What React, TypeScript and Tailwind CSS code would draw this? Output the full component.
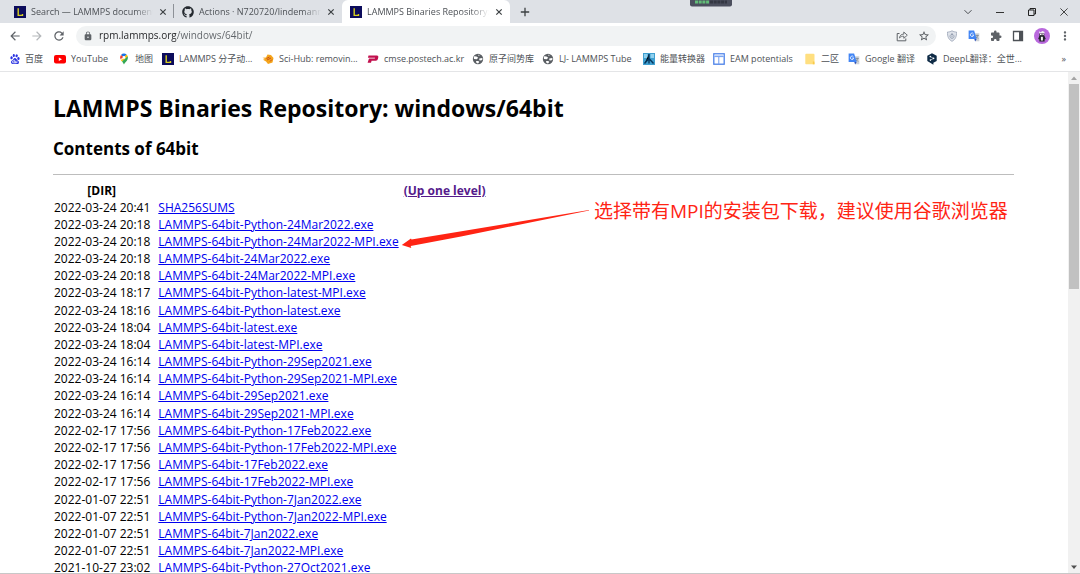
import React from "react";
import {
  MdArrowBack,
  MdArrowForward,
  MdRefresh,
  MdLock,
  MdStarBorder,
  MdExtension,
  MdMoreVert,
} from "react-icons/md";
import { FaGithub } from "react-icons/fa";
import { SiBaidu } from "react-icons/si";

const files: [string, string][] = [
  ["2022-03-24 20:41", "SHA256SUMS"],
  ["2022-03-24 20:18", "LAMMPS-64bit-Python-24Mar2022.exe"],
  ["2022-03-24 20:18", "LAMMPS-64bit-Python-24Mar2022-MPI.exe"],
  ["2022-03-24 20:18", "LAMMPS-64bit-24Mar2022.exe"],
  ["2022-03-24 20:18", "LAMMPS-64bit-24Mar2022-MPI.exe"],
  ["2022-03-24 18:17", "LAMMPS-64bit-Python-latest-MPI.exe"],
  ["2022-03-24 18:16", "LAMMPS-64bit-Python-latest.exe"],
  ["2022-03-24 18:04", "LAMMPS-64bit-latest.exe"],
  ["2022-03-24 18:04", "LAMMPS-64bit-latest-MPI.exe"],
  ["2022-03-24 16:14", "LAMMPS-64bit-Python-29Sep2021.exe"],
  ["2022-03-24 16:14", "LAMMPS-64bit-Python-29Sep2021-MPI.exe"],
  ["2022-03-24 16:14", "LAMMPS-64bit-29Sep2021.exe"],
  ["2022-03-24 16:14", "LAMMPS-64bit-29Sep2021-MPI.exe"],
  ["2022-02-17 17:56", "LAMMPS-64bit-Python-17Feb2022.exe"],
  ["2022-02-17 17:56", "LAMMPS-64bit-Python-17Feb2022-MPI.exe"],
  ["2022-02-17 17:56", "LAMMPS-64bit-17Feb2022.exe"],
  ["2022-02-17 17:56", "LAMMPS-64bit-17Feb2022-MPI.exe"],
  ["2022-01-07 22:51", "LAMMPS-64bit-Python-7Jan2022.exe"],
  ["2022-01-07 22:51", "LAMMPS-64bit-Python-7Jan2022-MPI.exe"],
  ["2022-01-07 22:51", "LAMMPS-64bit-7Jan2022.exe"],
  ["2022-01-07 22:51", "LAMMPS-64bit-7Jan2022-MPI.exe"],
  ["2021-10-27 23:02", "LAMMPS-64bit-Python-27Oct2021.exe"],
];

function LammpsIcon() {
  return (
    <svg viewBox="0 0 12 12" className="size-3 shrink-0">
      <rect width="12" height="12" fill="#0c0c5c" />
      <path d="M4.2 2.2v7.2h4.3V7.9" fill="none" stroke="#d8d020" strokeWidth="1.4" />
    </svg>
  );
}

function CloseIcon() {
  return (
    <svg viewBox="0 0 8 8" className="size-2">
      <path d="M1.3 1.3l5.4 5.4M6.7 1.3L1.3 6.7" stroke="#3c4043" strokeWidth="1.2" />
    </svg>
  );
}

function YoutubeIcon() {
  return (
    <svg viewBox="0 0 12 12" className="size-3 shrink-0">
      <rect y="2" width="12" height="8.4" rx="2" fill="#f00" />
      <path d="M4.8 4.4v3.6L8 6.2z" fill="#fff" />
    </svg>
  );
}

function MapsIcon() {
  return (
    <svg viewBox="0 0 12 12" className="size-3 shrink-0">
      <path d="M6 .6A3.9 3.9 0 0 0 3 2L6 4.6 8.6 1.6A3.9 3.9 0 0 0 6 .6z" fill="#1a73e8" />
      <path d="M3 2a3.9 3.9 0 0 0-.7 4L6 4.5z" fill="#ea4335" />
      <path d="M8.4 1.5L4 6.8 2.4 6.3c.5 1 1 1.5 1.5 2.2L9.8 3.4a3.9 3.9 0 0 0-1.4-1.9z" fill="#fbbc04" />
      <path d="M9.7 3.2L4 8.6c1 1.2 1.4 1.9 2 3 .7-2.2 3.9-3.6 3.9-7 0-.5-.1-1-.2-1.4z" fill="#34a853" />
      <circle cx="6" cy="4.5" r="1.4" fill="#fff" />
    </svg>
  );
}

function RavenIcon() {
  return (
    <svg viewBox="0 0 12 12" className="size-3 shrink-0">
      <path d="M.5 4.7L4 4.5 5.500 1.500l3.500.5L11.500 5l-1 4.500L6 11 4 8.500 1 6.800 3 6z" fill="#f5a51c" />
      <path d="M4.5 5.5l3-1.5M5 7l4-2M8 8.5l2-2" stroke="#c8501a" strokeWidth="1" />
    </svg>
  );
}

function PostechIcon() {
  return (
    <svg viewBox="0 0 12 12" className="size-3 shrink-0">
      <path d="M1.500 2.500H10q1.700 0 1.300 1.800L10.900 6q-.4 1.700-2 1.700H4.600L4 9.700H.6L2 5.500h5.800L8.100 4.800H.9z" fill="#c2104e" />
    </svg>
  );
}

function GlobeIcon() {
  return (
    <svg viewBox="0 0 12 12" className="size-3 shrink-0">
      <circle cx="6" cy="6" r="5.2" fill="#5a5e63" />
      <path d="M2.200 3.200l2.300.3 1.700 1.200-1.400 1.500-2.800-.2-.2-1.500zM6 1.800l1.500.2L7 3.200zM7.300 5.600l3-.6.2 1.500-1.400 1.100-1.800-.4zM4 8h2.300l1 1-1.300 1.500-1.500-.4z" fill="#fff" />
    </svg>
  );
}

function EnergyIcon() {
  return (
    <svg viewBox="0 0 12 12" className="size-3 shrink-0">
      <rect width="12" height="12" fill="#3f9fd0" />
      <path d="M1 1h3.500v4H1zM7.500 1H11v4H7.500z" fill="#8fd0ee" />
      <path d="M6 1v4.500L1.500 10.500M6 5.500l4.500 5M6 5v5.500" stroke="#06385f" strokeWidth="1.400" />
    </svg>
  );
}

function EamIcon() {
  return (
    <svg viewBox="0 0 12 12" className="size-3 shrink-0">
      <rect x=".8" y=".8" width="10.4" height="10.4" fill="#fff" stroke="#4a80e8" strokeWidth="1.3" />
      <path d="M1.5 1.5h9v1.600h-9z" fill="#c5d8fb" />
      <path d="M1.4 3.6h9.2M5.8 4v7" stroke="#6f9cf0" strokeWidth="1" />
    </svg>
  );
}

function FolderIcon() {
  return (
    <svg viewBox="0 0 12 12" className="size-3 shrink-0">
      <path d="M2.500.7h7a1 1 0 0 1 1 1v6.800l-.6.5.6.5v1.800h-8.500a.7.7 0 0 1-.7-.7V1.700a1 1 0 0 1 1.200-1z" fill="#ffdf80" />
      <path d="M8.800 8.500h1.700v2.800H8.800z" fill="#f9cb4b" />
    </svg>
  );
}

function TranslateIcon() {
  return (
    <svg viewBox="0 0 12 12" className="size-3 shrink-0">
      <path d="M5 3.200h6.300v8.100H7.500z" fill="#cfd3d8" />
      <path d="M7.500 5.500h3.200M9.100 4.700v.8M10 5.600L7.800 8.300M8.200 6.500l2 2.200" stroke="#6b7680" strokeWidth=".6" fill="none" />
      <path d="M.6.6h5.500l2.600 8.300H.6z" fill="#4285f4" />
      <path d="M6.300 9h2.400l-1.600 2.400z" fill="#2b50b8" />
      <path d="M5.500 3.900a1.700 1.700 0 1 0 .2 1.200H4.200" stroke="#fff" strokeWidth=".8" fill="none" />
    </svg>
  );
}

function DeeplIcon() {
  return (
    <svg viewBox="0 0 12 12" className="size-3 shrink-0">
      <path d="M6 .2l4.700 2.500v5.200L7.400 9.800v2L5.400 10.600 1.300 8V2.700z" fill="#0f2b46" />
      <path d="M4.300 3.600l3.200 1.800-3 1.700" stroke="#fff" strokeWidth=".6" fill="none" />
      <circle cx="4.300" cy="3.600" r=".8" fill="#fff" />
      <circle cx="7.600" cy="5.400" r=".8" fill="#fff" />
      <circle cx="4.400" cy="7.100" r=".8" fill="#fff" />
    </svg>
  );
}

function ShareIcon() {
  return (
    <svg viewBox="0 0 12 12" className="size-3" fill="none" stroke="#5f6368" strokeWidth="1">
      <path d="M3.500 3.500H1.200v7.300h8.600V8.500" />
      <path d="M3.500 8c.3-2.500 1.700-3.800 4.300-3.900V2l3.500 3.200L7.800 8.300V6.200C6 6.200 4.600 6.700 3.500 8z" strokeLinejoin="round" strokeWidth=".9" />
    </svg>
  );
}

function ShieldIcon() {
  return (
    <svg viewBox="0 0 12 12" className="size-3">
      <path d="M6 .8c1.500.9 3 1.200 4.500 1.200.2 4.500-1 7.500-4.500 9.300C2.500 9.500 1.300 6.500 1.500 2 3 2 4.500 1.700 6 .8z" fill="#dfe3ea" stroke="#a3acbc" strokeWidth=".9" />
      <path d="M6 3v1.500M4.200 5.500a2 2 0 1 0 3.600 0 2 2 0 0 0-3.600 0zM6 5.300v2" stroke="#8a95a8" strokeWidth=".8" fill="none" />
    </svg>
  );
}

function AvatarIcon() {
  return (
    <svg viewBox="0 0 16 16" className="size-4">
      <circle cx="8" cy="8" r="8" fill="#b968dd" />
      <path d="M5 3.300l1.500 1 2-1.200 2 .9v1.500H5.300z" fill="#eee" />
      <path d="M5.300 5.500h5v2.700h-5z" fill="#3a3540" />
      <path d="M6 5.700h1.500v1.300H6zM8.500 5.700h1.200v1.300H8.500z" fill="#fff" />
      <path d="M5.300 8h5.200l1.300 3-1.200.6v2H5.400v-2L4.200 11z" fill="#22252a" />
      <path d="M6.900 8.800h2v3.700h-2z" fill="#f4f4f4" />
    </svg>
  );
}

function Tab({ title, icon, active = false, divider = false }: { title: string; icon: React.ReactNode; active?: boolean; divider?: boolean }) {
  return (
    <div
      className={
        active
          ? "flex h-full w-42 items-center gap-[5px] rounded-t-md bg-white pr-[7px] pl-2"
          : "relative flex h-full w-42 items-center gap-[5px] pr-[7px] pl-2"
      }
    >
      {icon}
      <a href="#" className="min-w-0 flex-1 text-[9px] whitespace-nowrap text-[#4d5156] [mask-image:linear-gradient(90deg,#000_85%,transparent)]">
        {title}
      </a>
      <button aria-label="Close tab" className="ml-px">
        <CloseIcon />
      </button>
      {divider && <span className="absolute top-1 right-0 h-3.5 w-px bg-[#8d9197]" />}
    </div>
  );
}

const bookmarks: { label: string; icon: React.ReactNode; width: string }[] = [
  { label: "百度", icon: <SiBaidu className="size-2.5 shrink-0 text-[#2932e1]" />, width: "w-11" },
  { label: "YouTube", icon: <YoutubeIcon />, width: "w-16" },
  { label: "地图", icon: <MapsIcon />, width: "w-11" },
  { label: "LAMMPS 分子动...", icon: <LammpsIcon />, width: "w-[100px]" },
  { label: "Sci-Hub: removin...", icon: <RavenIcon />, width: "w-[105px]" },
  { label: "cmse.postech.ac.kr", icon: <PostechIcon />, width: "w-[105px]" },
  { label: "原子间势库", icon: <GlobeIcon />, width: "w-[70px]" },
  { label: "LJ- LAMMPS Tube", icon: <GlobeIcon />, width: "w-[101px]" },
  { label: "能量转换器", icon: <EnergyIcon />, width: "w-[70px]" },
  { label: "EAM potentials", icon: <EamIcon />, width: "w-[91px]" },
  { label: "二区", icon: <FolderIcon />, width: "w-11" },
  { label: "Google 翻译", icon: <TranslateIcon />, width: "w-[78px]" },
  { label: "DeepL翻译：全世...", icon: <DeeplIcon />, width: "w-[100px]" },
];

export default function App() {
  return (
    <div className="flex h-screen flex-col overflow-hidden border-b border-[#c8c8c8] bg-white font-['Open_Sans','Noto_Sans_CJK_SC',sans-serif] text-black">
      <header className="shrink-0">
        <div className="relative flex h-[23px] items-center bg-[#dee1e6] pl-1.5">
          <Tab title="Search — LAMMPS document" icon={<LammpsIcon />} divider />
          <Tab title="Actions · N720720/lindemann" icon={<FaGithub className="size-3 shrink-0 text-[#24292f]" />} />
          <Tab title="LAMMPS Binaries Repository:" icon={<LammpsIcon />} active />
          <button aria-label="New tab" className="ml-2.5">
            <svg viewBox="0 0 10 10" className="size-2.5">
              <path d="M5 .8v8.400M.8 5h8.400" stroke="#3c4043" strokeWidth="1.300" />
            </svg>
          </button>
          <div className="ml-auto flex items-center gap-6 pr-3">
            <button aria-label="Search tabs">
              <svg viewBox="0 0 8 8" className="size-2"><path d="M.5 2.200L4 5.700l3.500-3.500" fill="none" stroke="#4a4d52" /></svg>
            </button>
            <button aria-label="Minimize">
              <svg viewBox="0 0 8 8" className="size-2"><path d="M0 4.500h8" stroke="#333" /></svg>
            </button>
            <button aria-label="Restore">
              <svg viewBox="0 0 8 8" className="size-2"><path d="M.5 2h5.500v5.500H.5zM2 2V.5h5.500V6H6" fill="none" stroke="#222" /></svg>
            </button>
            <button aria-label="Close window">
              <svg viewBox="0 0 8 8" className="size-2"><path d="M.4.4l7.200 7.200M7.600.4L.4 7.600" stroke="#333" strokeWidth=".9" /></svg>
            </button>
          </div>
          <svg viewBox="0 0 42 7" className="absolute top-0 left-[690px] h-[7px] w-[42px]">
            <path d="M0 0h42v4.500q0 2-2 2H2q-2 0-2-2z" fill="#4c4f5e" />
            <path d="M5 2h14" stroke="#62bd78" strokeWidth="3" strokeDasharray="3 .7" />
            <path d="M20 2h17" stroke="#343743" strokeWidth="3" strokeDasharray="3 .7" />
          </svg>
        </div>

        <div className="flex h-[25px] items-center pr-2 pl-2">
          <div className="flex w-[68px] items-center gap-2 text-[#5f6368]">
            <button aria-label="Back"><MdArrowBack className="size-3.5" /></button>
            <button aria-label="Forward"><MdArrowForward className="size-3.5 text-[#b4b7ba]" /></button>
            <button aria-label="Reload"><MdRefresh className="size-3.5" /></button>
          </div>
          <div className="flex h-5 flex-1 items-center rounded-full bg-[#f1f3f4] pr-1.5 pl-[7px]">
            <MdLock className="size-2.5 text-[#5f6368]" />
            <input
              aria-label="Address"
              defaultValue="rpm.lammps.org/windows/64bit/"
              className="ml-1.5 min-w-0 flex-1 bg-[linear-gradient(90deg,#202124_77px,#5f6368_77px)] bg-clip-text text-[10px] text-transparent outline-none"
            />
            <button aria-label="Share"><ShareIcon /></button>
            <button aria-label="Bookmark this page" className="ml-2.5"><MdStarBorder className="size-3 text-[#4d5156]" /></button>
          </div>
          <div className="ml-2.5 flex items-center gap-2.5 text-[#5f6368]">
            <button aria-label="Shield extension"><ShieldIcon /></button>
            <button aria-label="Translate extension"><TranslateIcon /></button>
            <button aria-label="Extensions"><MdExtension className="size-3" /></button>
            <button aria-label="Side panel">
              <svg viewBox="0 0 12 12" className="size-3"><path d="M1.500 1.500h9v9h-9z" fill="none" stroke="#4d5156" strokeWidth="1.300" /><path d="M7 1.500h3.500v9H7z" fill="#4d5156" /></svg>
            </button>
            <div className="flex items-center gap-2">
              <button aria-label="Profile"><AvatarIcon /></button>
              <button aria-label="Menu"><MdMoreVert className="size-3.5" /></button>
            </div>
          </div>
        </div>

        <nav aria-label="Bookmarks" className="flex h-6 items-center border-b border-[#e4e5e7] pr-3.5 pb-px pl-2.5 text-[9px] text-[#4d5156]">
          <div className="flex">
            {bookmarks.map((b) => (
              <a key={b.label} href="#" className={`${b.width} flex shrink-0 items-center gap-[5px] whitespace-nowrap`}>
                {b.icon}
                <span>{b.label}</span>
              </a>
            ))}
          </div>
          <button aria-label="More bookmarks" className="ml-auto">»</button>
        </nav>
      </header>

      <div className="flex min-h-0 flex-1">
        <main className="relative min-w-0 flex-1 overflow-hidden pr-[5%] pl-[53px]">
          <h1 className="mt-5 text-[23px] leading-8 font-bold whitespace-nowrap">LAMMPS Binaries Repository: windows/64bit</h1>
          <h2 className="mt-[11px] text-[17px] leading-7 font-bold">Contents of 64bit</h2>
          <hr className="mt-[11px] border-[#bdbdbd]" />
          <table className="mt-2 h-[394px] w-full text-xs leading-4">
            <thead>
              <tr>
                <th className="w-1/10 font-bold">[DIR]</th>
                <th className="w-3/5 pl-3 font-bold">
                  <a href="#" className="text-[#551a8b] underline">(Up one level)</a>
                </th>
                <th />
              </tr>
            </thead>
            <tbody>
              {files.map(([date, name]) => (
                <tr key={name}>
                  <td className="pl-px whitespace-nowrap">{date}</td>
                  <td className="pl-2">
                    <a href="#" className="text-[#0000ee] underline">{name}</a>
                  </td>
                  <td />
                </tr>
              ))}
            </tbody>
          </table>

          <svg viewBox="0 0 190 40" className="absolute top-[136px] left-[401px] h-10 w-[190px]">
            <path d="M188 2L10.500 31.500 10 30.500.8 37l9.500 3-.6-2L60 28.500 188 2.600z" fill="#ff2414" />
          </svg>
          <p className="absolute top-[125px] left-[594px] text-[19px] leading-7 whitespace-nowrap text-[#ff2414]">
            选择带有MPI的安装包下载，建议使用谷歌浏览器
          </p>
        </main>

        <div aria-hidden="true" className="flex w-3 flex-col items-center bg-[#f1f1f1]">
          <svg viewBox="0 0 12 12" className="size-3 shrink-0"><path d="M6 4.500L9 8H3z" fill="#a3a3a3" /></svg>
          <div className="h-[41%] w-2.5 bg-[#c1c1c1]" />
          <svg viewBox="0 0 12 12" className="mt-auto size-3"><path d="M6 8L9 4.500H3z" fill="#505050" /></svg>
        </div>
      </div>
    </div>
  );
}
